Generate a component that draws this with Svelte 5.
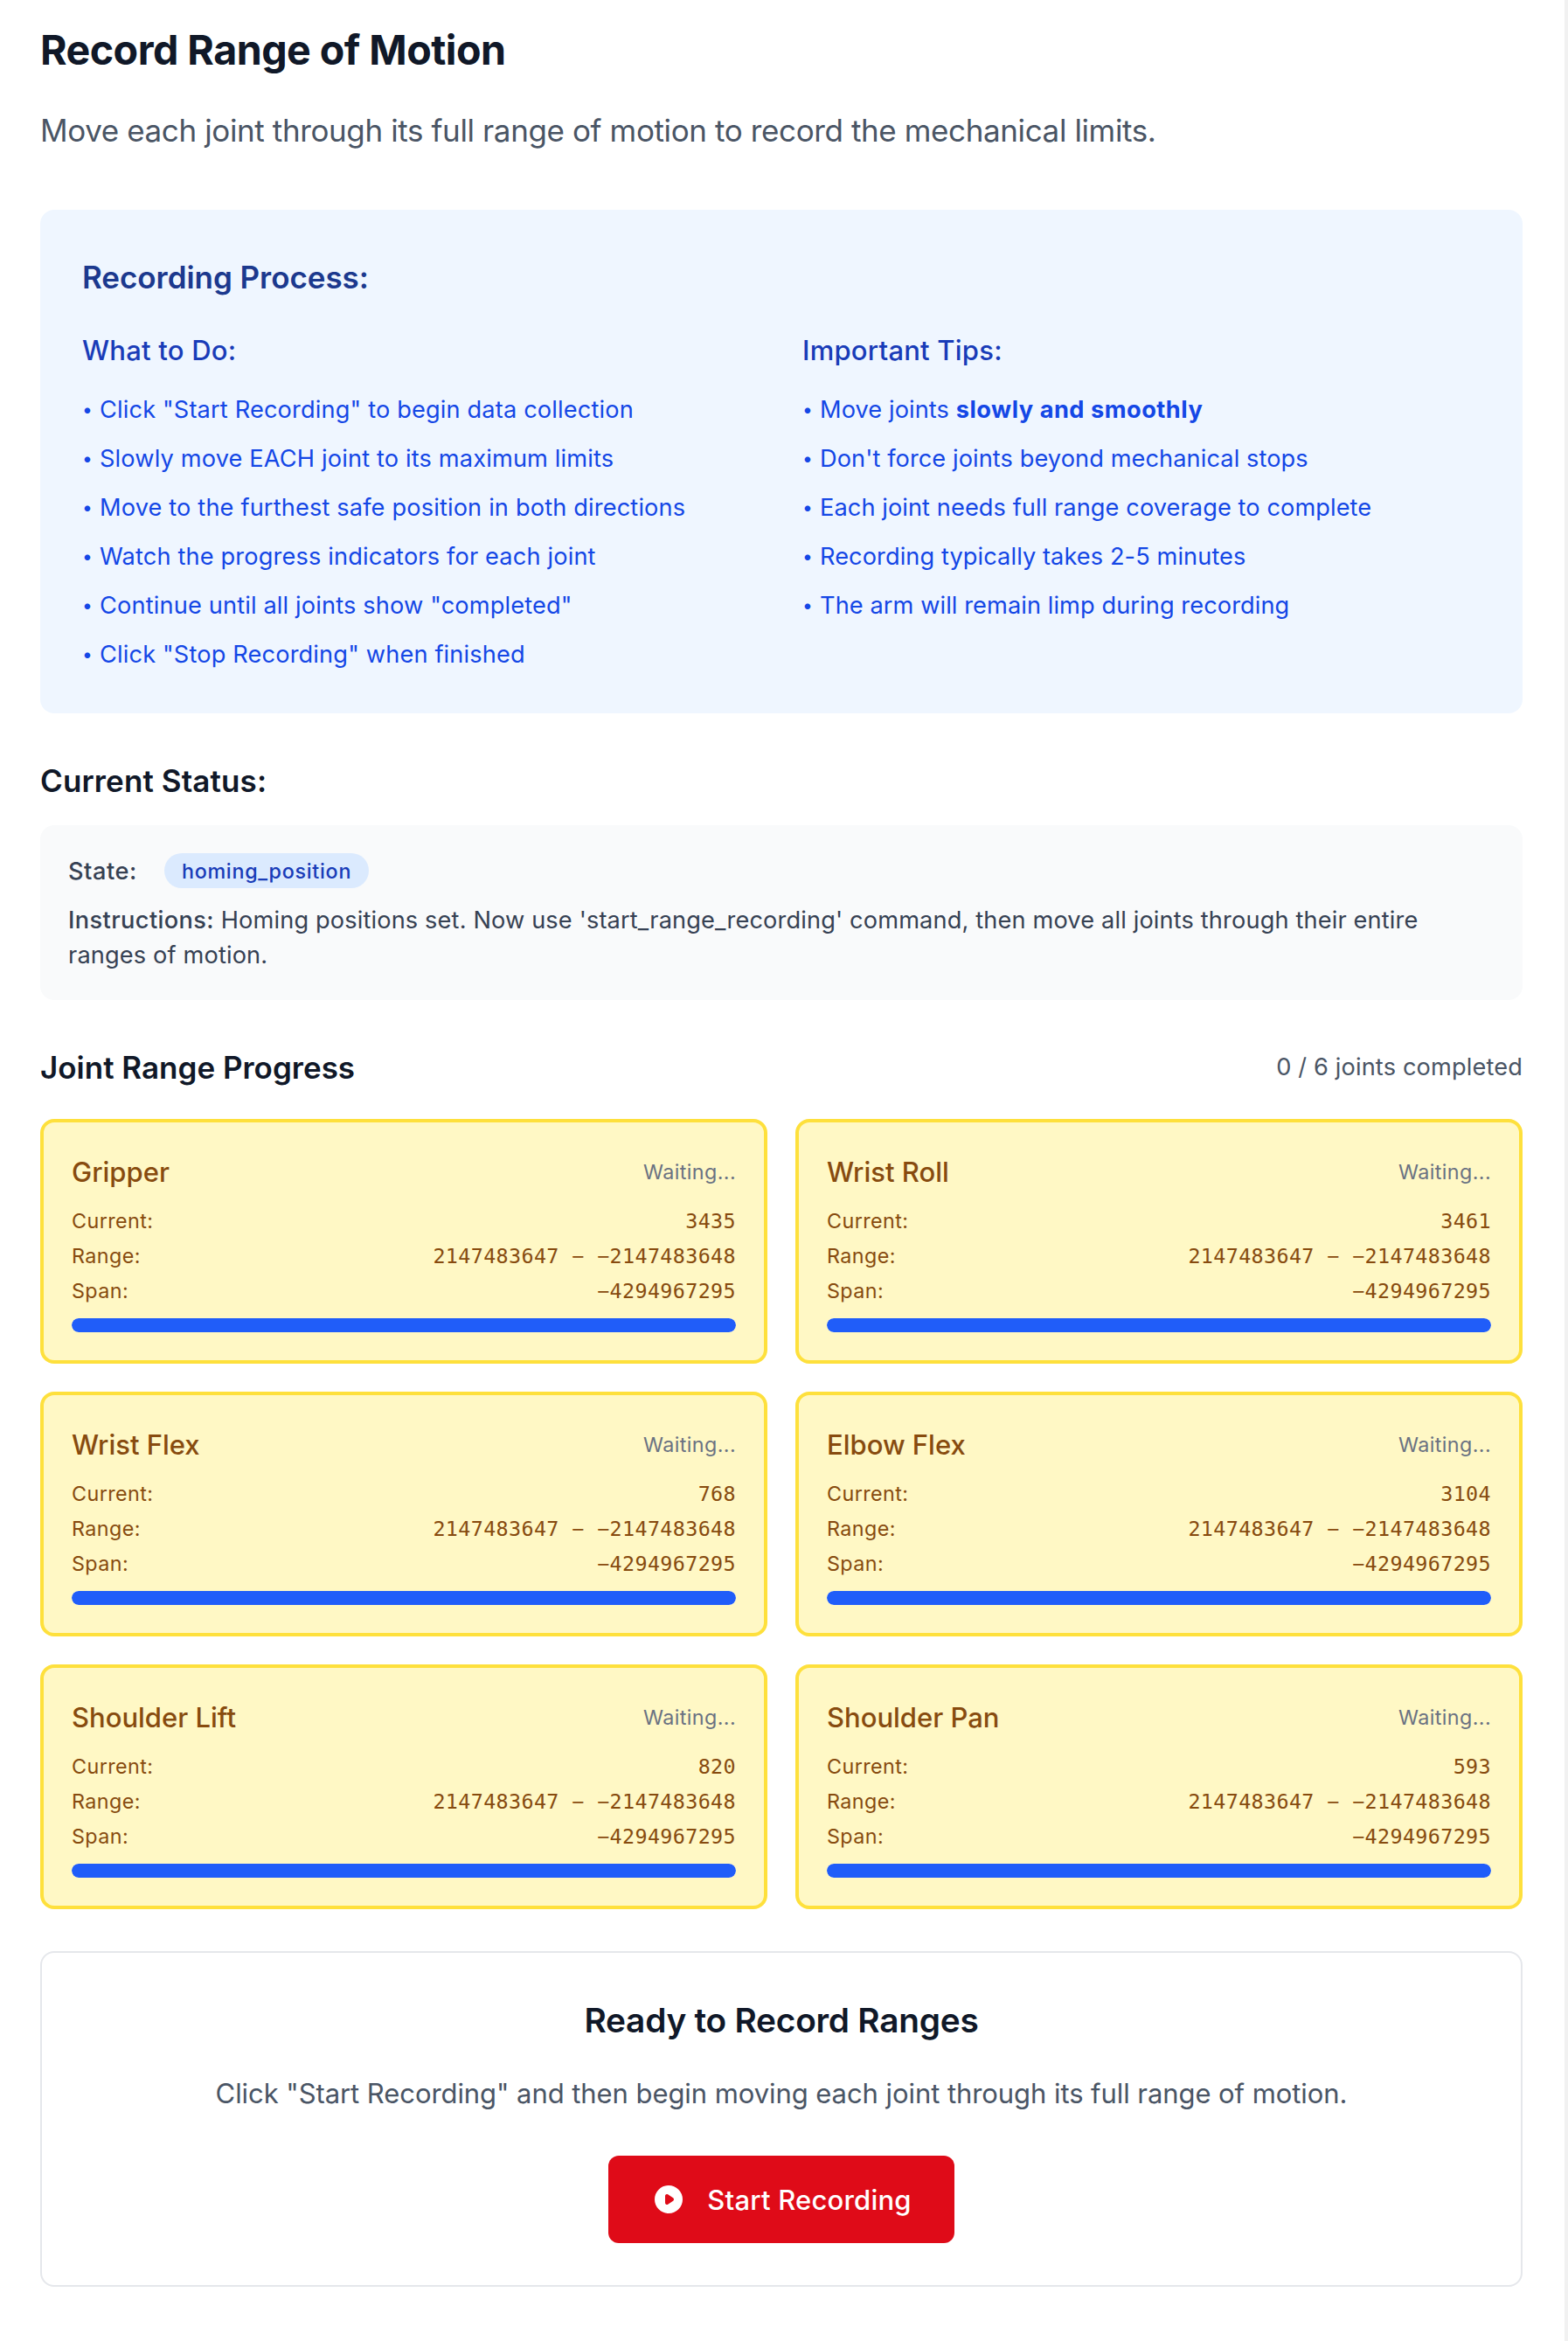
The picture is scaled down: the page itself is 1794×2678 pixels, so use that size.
<script>
  const steps = [
    'Click "Start Recording" to begin data collection',
    'Slowly move EACH joint to its maximum limits',
    'Move to the furthest safe position in both directions',
    'Watch the progress indicators for each joint',
    'Continue until all joints show "completed"',
    'Click "Stop Recording" when finished'
  ];

  const tips = [
    "Don't force joints beyond mechanical stops",
    'Each joint needs full range coverage to complete',
    'Recording typically takes 2-5 minutes',
    'The arm will remain limp during recording'
  ];

  const joints = [
    { name: 'Gripper', current: 3435 },
    { name: 'Wrist Roll', current: 3461 },
    { name: 'Wrist Flex', current: 768 },
    { name: 'Elbow Flex', current: 3104 },
    { name: 'Shoulder Lift', current: 820 },
    { name: 'Shoulder Pan', current: 593 }
  ];

  const progress = 100;
</script>

<main class="page">
  <h1>Record Range of Motion</h1>
  <p class="lead">Move each joint through its full range of motion to record the mechanical limits.</p>

  <section class="process">
    <h2>Recording Process:</h2>
    <div class="columns">
      <div>
        <h3>What to Do:</h3>
        <ul class="steps">
          {#each steps as step}
            <li><span class="dot">•</span><span>{step}</span></li>
          {/each}
        </ul>
      </div>
      <div>
        <h3>Important Tips:</h3>
        <ul class="tips">
          <li><span class="dot">•</span><span>Move joints <strong>slowly and smoothly</strong></span></li>
          {#each tips as tip}
            <li><span class="dot">•</span><span>{tip}</span></li>
          {/each}
        </ul>
      </div>
    </div>
  </section>

  <section class="status">
    <h2>Current Status:</h2>
    <div class="status-box">
      <div class="state">
        <span class="label">State:</span>
        <span class="badge">homing_position</span>
      </div>
      <p>
        <span class="label">Instructions:</span> Homing positions set. Now use 'start_range_recording' command, then move all joints through their entire ranges of motion.
      </p>
    </div>
  </section>

  <section class="joints">
    <header>
      <h2>Joint Range Progress</h2>
      <span class="count">0 / {joints.length} joints completed</span>
    </header>
    <div class="grid">
      {#each joints as joint}
        <article class="card">
          <div class="card-head">
            <h3>{joint.name}</h3>
            <span class="waiting">Waiting...</span>
          </div>
          <dl>
            <div><dt>Current:</dt><dd>{joint.current}</dd></div>
            <div><dt>Range:</dt><dd>2147483647 − −2147483648</dd></div>
            <div><dt>Span:</dt><dd>−4294967295</dd></div>
          </dl>
          <div class="track"><div class="fill" style="width: {progress}%"></div></div>
        </article>
      {/each}
    </div>
  </section>

  <section class="ready">
    <h2>Ready to Record Ranges</h2>
    <p>Click "Start Recording" and then begin moving each joint through its full range of motion.</p>
    <button type="button">
      <svg viewBox="0 0 20 20" width="40" height="40" fill="currentColor" aria-hidden="true">
        <path fill-rule="evenodd" clip-rule="evenodd" d="M10 18a8 8 0 100-16 8 8 0 000 16zM9.555 7.168A1 1 0 008 8v4a1 1 0 001.555.832l3-2a1 1 0 000-1.664l-3-2z" />
      </svg>
      <span>Start Recording</span>
    </button>
  </section>
</main>

<style>
  :global(body) {
    margin: 0;
    background: #fff;
  }

  .page {
    box-sizing: border-box;
    width: 100%;
    min-height: 2678px;
    padding: 24px 48px 0 46px;
    border-right: 4px solid #f1f1f1;
    background: #fff;
    color: #101828;
    font-family: "Inter", "Liberation Sans", sans-serif;
  }

  h1, h2, h3, p, ul, dl, dd { margin: 0; padding: 0; }
  ul { list-style: none; }

  h1 {
    font-size: 46.6px;
    line-height: 64px;
    font-weight: 700;
    letter-spacing: -0.53px;
    margin-top: 1px;
  }

  .lead {
    margin: 32px 0 63px;
    font-size: 35px;
    line-height: 56px;
    letter-spacing: -0.385px;
    color: #4a5565;
  }

  h2 {
    padding-top: 2px;
    font-size: 35px;
    line-height: 54px;
    font-weight: 600;
  }

  .process {
    padding: 48px;
    border-radius: 16px;
    background: #eff6ff;
    color: #1c398e;
  }

  .process h2 { letter-spacing: -0.05px; }

  .columns {
    display: grid;
    grid-template-columns: 1fr 1fr;
    gap: 48px;
    margin-top: 32px;
  }

  .process h3 {
    margin-bottom: 24px;
    padding-top: 2px;
    font-size: 31px;
    line-height: 46px;
    font-weight: 500;
    letter-spacing: 0.22px;
    color: #193cb8;
  }

  .process ul {
    display: flex;
    flex-direction: column;
    gap: 16px;
    padding-top: 1px;
    margin-bottom: -1px;
    font-size: 27.2px;
    line-height: 40px;
    color: #1447e6;
  }

  .steps { letter-spacing: 0.15px; }
  .tips { letter-spacing: 0.08px; }
  .process li { display: flex; }
  .dot { width: 20px; flex: none; font-size: 21px; }
  strong { font-weight: 700; letter-spacing: 0.5px; }

  .status { margin-top: 48px; }
  .status h2 { letter-spacing: 0.12px; }

  .status-box {
    display: flex;
    flex-direction: column;
    gap: 16px;
    margin-top: 24px;
    padding: 32px;
    border-radius: 16px;
    background: #f9fafb;
    color: #364153;
    font-size: 27.2px;
    line-height: 40px;
    letter-spacing: 0.14px;
  }

  .status-box p { padding-top: 1px; margin-bottom: -1px; }

  .state { display: flex; align-items: center; gap: 31px; height: 40px; }
  .state .label { padding-top: 2px; letter-spacing: 0.55px; }
  .label { font-weight: 500; letter-spacing: 0.38px; }

  .badge {
    padding: 5px 20px 3px;
    border-radius: 20px;
    background: #dbeafe;
    color: #193cb8;
    font-size: 23.3px;
    line-height: 32px;
    font-weight: 500;
    letter-spacing: 0.72px;
  }

  .joints { margin-top: 48px; }
  .joints header { display: flex; align-items: center; justify-content: space-between; }

  .count {
    padding-top: 2px;
    font-size: 27.2px;
    line-height: 40px;
    letter-spacing: 0.137px;
    color: #4a5565;
  }

  .grid {
    display: grid;
    grid-template-columns: 1fr 1fr;
    gap: 32px;
    margin-top: 32px;
  }

  .card {
    padding: 32px;
    border: 4px solid #fee03c;
    border-radius: 16px;
    background: #fff8c5;
    color: #874b0f;
  }

  .card-head { display: flex; align-items: center; justify-content: space-between; height: 48px; }
  .card h3 { padding-top: 2px; font-size: 31px; line-height: 46px; font-weight: 500; }

  .waiting {
    padding-top: 2px;
    font-size: 23.3px;
    line-height: 32px;
    letter-spacing: 0.4px;
    color: #6a7282;
  }

  dl {
    display: flex;
    flex-direction: column;
    gap: 8px;
    margin: 16px 0;
  }

  dl div {
    display: flex;
    justify-content: space-between;
    height: 32px;
    line-height: 34px;
  }

  dt { font-size: 23.3px; letter-spacing: 0.42px; }

  dd {
    font-family: "DejaVu Sans Mono", "Liberation Mono", monospace;
    font-size: 23.4px;
    letter-spacing: 0.36px;
    white-space: nowrap;
  }

  .track { height: 16px; border-radius: 8px; background: #e5e7eb; overflow: hidden; }
  .fill { height: 16px; border-radius: 8px; background: #205df9; }

  .ready {
    display: flex;
    flex-direction: column;
    align-items: center;
    margin-top: 48px;
    padding: 48px;
    border: 2px solid #e5e7eb;
    border-radius: 16px;
    text-align: center;
  }

  .ready h2 { font-size: 38.8px; letter-spacing: -0.244px; }

  .ready p {
    margin: 32px 0 48px;
    padding-top: 2px;
    font-size: 31px;
    line-height: 46px;
    letter-spacing: -0.068px;
    color: #4a5565;
  }

  button {
    display: flex;
    align-items: center;
    justify-content: center;
    gap: 24px;
    box-sizing: border-box;
    width: 396px;
    height: 100px;
    padding: 0;
    border: 0;
    border-radius: 12px;
    background: #df0b18;
    color: #fff;
    font-family: inherit;
    font-size: 31px;
    line-height: 46px;
    font-weight: 500;
    letter-spacing: 0.2px;
  }

  button span { padding-top: 2px; }
</style>
